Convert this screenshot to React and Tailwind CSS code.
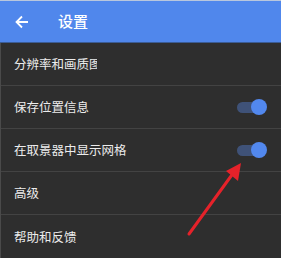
const rows = [
  { label: "分辨率和画质图", toggle: false, clip: true },
  { label: "保存位置信息", toggle: true },
  { label: "在取景器中显示网格", toggle: true },
  { label: "高级", toggle: false },
  { label: "帮助和反馈", toggle: false },
];

const Toggle = () => (
  <div className="relative w-[30px] h-[16px] flex items-center">
    <div className="absolute left-0 right-[4px] h-[11px] rounded-full bg-[#3f5278]" />
    <div className="absolute right-0 w-[16px] h-[16px] rounded-full bg-[#5288ee]" />
  </div>
);

export default function App() {
  return (
    <div
      className="relative w-[281px] h-[258px] overflow-hidden bg-[#2e2e2e]"
      style={{ fontFamily: '"Noto Sans CJK SC", "Noto Sans", sans-serif' }}
    >
      {/* header */}
      <div className="h-[43px] bg-[#5087ec] border-t border-[#b9c7dd] border-b border-b-[#3b5c95] flex items-center">
        <svg className="ml-[15px]" width="14" height="14" viewBox="0 0 14 14">
          <path d="M13 7H2M7 1.5L1.5 7L7 12.5" fill="none" stroke="#fff" strokeWidth="1.8" />
        </svg>
        <span className="ml-[29px] text-[15px] font-medium text-white">设置</span>
      </div>

      {/* list */}
      <div className="flex flex-col border-l border-[#4a4a4a]">
        {rows.map((r, i) => (
          <div
            key={i}
            className={`h-[43px] flex items-center justify-between pl-[13px] pr-[14px] ${
              i < rows.length - 1 ? "border-b border-[#434343]" : ""
            }`}
          >
            <span
              className={`text-[12.5px] text-[#ececec] whitespace-nowrap pt-[1px] ${
                r.clip ? "w-[83px] overflow-hidden" : ""
              }`}
            >
              {r.label}
            </span>
            {r.toggle && <Toggle />}
          </div>
        ))}
      </div>

      {/* annotation arrow */}
      <svg className="absolute left-0 top-0" width="281" height="258" viewBox="0 0 281 258">
        <line x1="189" y1="234" x2="234" y2="172" stroke="#e5222a" strokeWidth="3" strokeLinecap="round" />
        <polygon points="241,163 226,171 238,181" fill="#e5222a" />
      </svg>
    </div>
  );
}
